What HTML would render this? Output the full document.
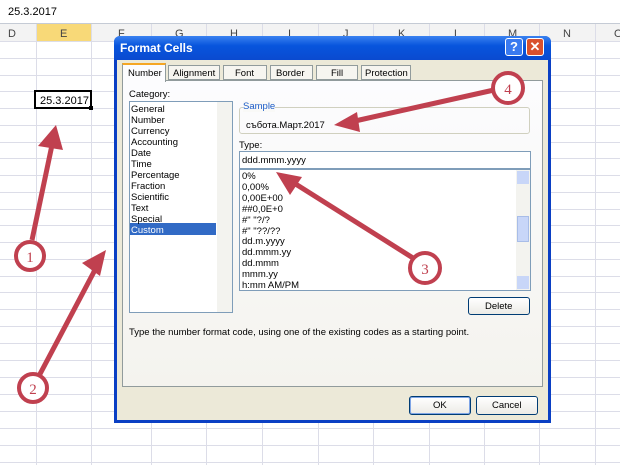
<!DOCTYPE html>
<html><head><style>
*{margin:0;padding:0;box-sizing:border-box}
body{width:620px;height:465px;overflow:hidden;background:#fff;font-family:"Liberation Sans",sans-serif;position:relative}
.abs{position:absolute}
.t{font-size:9.5px;color:#000;position:absolute;white-space:nowrap}
</style></head><body>
<div class="abs" style="left:0;top:0;width:620px;height:24px;background:#fff;border-bottom:1px solid #c5cbd5"></div>
<div class="t" style="left:8px;top:6px;font-size:11px">25.3.2017</div>
<svg class="abs" style="left:0;top:0" width="620" height="465">
<rect x="0" y="24" width="620" height="17" fill="#f3f3f3"/>
<rect x="36" y="24" width="55" height="17" fill="#f8d978"/>
<g stroke="#dcdde8" stroke-width="1">
<line x1="0" y1="41.5" x2="620" y2="41.5"/>
<line x1="0" y1="58.5" x2="620" y2="58.5"/><line x1="0" y1="75.5" x2="620" y2="75.5"/>
<line x1="0" y1="91.5" x2="620" y2="91.5"/><line x1="0" y1="108.5" x2="620" y2="108.5"/>
<line x1="0" y1="125.5" x2="620" y2="125.5"/><line x1="0" y1="142.5" x2="620" y2="142.5"/>
<line x1="0" y1="158.5" x2="620" y2="158.5"/><line x1="0" y1="175.5" x2="620" y2="175.5"/>
<line x1="0" y1="192.5" x2="620" y2="192.5"/><line x1="0" y1="209.5" x2="620" y2="209.5"/>
<line x1="0" y1="225.5" x2="620" y2="225.5"/><line x1="0" y1="242.5" x2="620" y2="242.5"/>
<line x1="0" y1="259.5" x2="620" y2="259.5"/><line x1="0" y1="276.5" x2="620" y2="276.5"/>
<line x1="0" y1="292.5" x2="620" y2="292.5"/><line x1="0" y1="309.5" x2="620" y2="309.5"/>
<line x1="0" y1="326.5" x2="620" y2="326.5"/><line x1="0" y1="343.5" x2="620" y2="343.5"/>
<line x1="0" y1="360.5" x2="620" y2="360.5"/><line x1="0" y1="377.5" x2="620" y2="377.5"/>
<line x1="0" y1="394.5" x2="620" y2="394.5"/><line x1="0" y1="411.5" x2="620" y2="411.5"/>
<line x1="0" y1="428.5" x2="620" y2="428.5"/><line x1="0" y1="445.5" x2="620" y2="445.5"/>
<line x1="0" y1="462.5" x2="620" y2="462.5"/>
<line x1="36.5" y1="24" x2="36.5" y2="465"/><line x1="91.5" y1="24" x2="91.5" y2="465"/>
<line x1="151.5" y1="24" x2="151.5" y2="465"/><line x1="206.5" y1="24" x2="206.5" y2="465"/>
<line x1="262.5" y1="24" x2="262.5" y2="465"/><line x1="318.5" y1="24" x2="318.5" y2="465"/>
<line x1="373.5" y1="24" x2="373.5" y2="465"/><line x1="429.5" y1="24" x2="429.5" y2="465"/>
<line x1="484.5" y1="24" x2="484.5" y2="465"/><line x1="539.5" y1="24" x2="539.5" y2="465"/>
<line x1="595.5" y1="24" x2="595.5" y2="465"/>
</g>
<g font-size="11" fill="#444" font-family="Liberation Sans">
<text x="8" y="37">D</text><text x="60" y="37">E</text>
<text x="118" y="37">F</text><text x="175" y="37">G</text><text x="230" y="37">H</text><text x="288" y="37">I</text>
<text x="343" y="37">J</text><text x="398" y="37">K</text><text x="454" y="37">L</text><text x="508" y="37">M</text>
<text x="563" y="37">N</text><text x="614" y="37">O</text></g>
<rect x="35" y="91" width="56" height="17" fill="#fff" stroke="#000" stroke-width="2"/>
<rect x="89" y="106" width="4" height="4" fill="#000"/>
<text x="40" y="104" font-size="11" font-family="Liberation Sans">25.3.2017</text>
</svg>
<div class="abs" style="left:114px;top:36px;width:437px;height:387px;background:#0a3fc4;border-radius:6px 6px 0 0"></div>
<div class="abs" style="left:114px;top:36px;width:437px;height:24px;background:linear-gradient(#3b82f0,#0855dd 40%,#0a4ad0);border-radius:6px 6px 0 0"></div>
<div class="t" style="left:120px;top:41px;color:#fff;font-weight:bold;font-size:12px">Format Cells</div>
<div class="abs" style="left:505px;top:38px;width:18px;height:18px;background:#3a7af0;border:1px solid #fff;border-radius:3px;color:#fff;font-weight:bold;font-size:13px;text-align:center;line-height:16px">?</div>
<div class="abs" style="left:526px;top:38px;width:18px;height:18px;background:#d9502e;border:1px solid #fff;border-radius:3px;color:#fff;font-weight:bold;font-size:13px;text-align:center;line-height:16px">✕</div>
<div class="abs" style="left:117px;top:60px;width:431px;height:360px;background:#ece9d8"></div>
<div class="abs" style="left:122px;top:80px;width:421px;height:307px;border:1px solid #919b9c;background:linear-gradient(#fcfcfe,#f4f3ee)"></div>
<div class="abs" style="left:122px;top:63px;width:44px;height:19px;background:#fcfcfe;border:1px solid #919b9c;border-bottom:none;border-top:2px solid #f5a623"></div>
<div class="t" style="left:128px;top:68px">Number</div>
<div class="abs" style="left:168px;top:65px;width:52px;height:15px;border:1px solid #919b9c;background:#f6f5f0"></div><div class="t" style="left:173px;top:68px">Alignment</div>
<div class="abs" style="left:223px;top:65px;width:44px;height:15px;border:1px solid #919b9c;background:#f6f5f0"></div><div class="t" style="left:235px;top:68px">Font</div>
<div class="abs" style="left:270px;top:65px;width:43px;height:15px;border:1px solid #919b9c;background:#f6f5f0"></div><div class="t" style="left:276px;top:68px">Border</div>
<div class="abs" style="left:316px;top:65px;width:42px;height:15px;border:1px solid #919b9c;background:#f6f5f0"></div><div class="t" style="left:331px;top:68px">Fill</div>
<div class="abs" style="left:361px;top:65px;width:50px;height:15px;border:1px solid #919b9c;background:#f6f5f0"></div><div class="t" style="left:365px;top:68px">Protection</div>
<div class="t" style="left:129px;top:89px">Category:</div>
<div class="abs" style="left:129px;top:101px;width:104px;height:212px;background:#fff;border:1px solid #7f9db9"></div>
<div class="abs" style="left:217px;top:102px;width:15px;height:210px;background:#f3f3ef"></div>
<div class="abs" style="left:130px;top:223px;width:86px;height:12px;background:#316ac5"></div>
<div class="t" style="left:131px;top:104px;line-height:11px">General<br>Number<br>Currency<br>Accounting<br>Date<br>Time<br>Percentage<br>Fraction<br>Scientific<br>Text<br>Special<br><span style="color:#fff">Custom</span></div>
<div class="abs" style="left:239px;top:107px;width:291px;height:27px;border:1px solid #d0d0bf;border-radius:3px"></div>
<div class="t" style="left:243px;top:101px;color:#1c5cc8;background:#f9f9f7">Sample</div>
<div class="t" style="left:246px;top:120px">събота.Март.2017</div>
<div class="t" style="left:239px;top:140px">Type:</div>
<div class="abs" style="left:239px;top:151px;width:292px;height:18px;background:#fff;border:1px solid #7f9db9"></div>
<div class="t" style="left:242px;top:155px">ddd.mmm.yyyy</div>
<div class="abs" style="left:239px;top:169px;width:292px;height:122px;background:#fff;border:1px solid #7f9db9"></div>
<div class="abs" style="left:516px;top:170px;width:14px;height:120px;background:#f3f3ef"></div>
<div class="abs" style="left:517px;top:216px;width:12px;height:26px;background:#c8d6f8;border:1px solid #a8bde8"></div>
<div class="abs" style="left:517px;top:171px;width:12px;height:13px;background:#c8d6f8"></div>
<div class="abs" style="left:517px;top:276px;width:12px;height:13px;background:#c8d6f8"></div>
<div class="t" style="left:242px;top:172px;line-height:10.9px">0%<br>0,00%<br>0,00E+00<br>##0,0E+0<br>#" "?/?<br>#" "??/??<br>dd.m.yyyy<br>dd.mmm.yy<br>dd.mmm<br>mmm.yy<br>h:mm AM/PM</div>
<div class="abs" style="left:468px;top:297px;width:62px;height:18px;border:1px solid #003c74;border-radius:3px;background:linear-gradient(#fff,#ecebe6)"></div>
<div class="t" style="left:485px;top:301px">Delete</div>
<div class="t" style="left:129px;top:327px">Type the number format code, using one of the existing codes as a starting point.</div>
<div class="abs" style="left:409px;top:396px;width:62px;height:19px;border:1px solid #003c74;border-radius:3px;background:linear-gradient(#fff,#ecebe6);box-shadow:inset 0 0 0 1px #7ea5e6"></div>
<div class="t" style="left:433px;top:400px">OK</div>
<div class="abs" style="left:476px;top:396px;width:62px;height:19px;border:1px solid #003c74;border-radius:3px;background:linear-gradient(#fff,#ecebe6)"></div>
<div class="t" style="left:492px;top:400px">Cancel</div>
<svg class="abs" style="left:0;top:0" width="620" height="465">
<g stroke="#c0404f" stroke-width="5" fill="none">
<line x1="32" y1="240" x2="52" y2="145"/>
<line x1="40" y1="374" x2="96" y2="268"/>
<line x1="413" y1="258" x2="294" y2="183"/>
<line x1="494" y1="90" x2="355" y2="121"/>
</g>
<g fill="#c0404f">
<polygon points="56,125 38,146 63,150"/>
<polygon points="106,250 82,263 100,276"/>
<polygon points="276,172 290,195 302,177"/>
<polygon points="334,125 357,112 360,132"/>
</g>
<g stroke="#c0404f" stroke-width="4" fill="#fff">
<circle cx="30" cy="256" r="14"/><circle cx="33" cy="388" r="14"/>
<circle cx="425" cy="268" r="15"/><circle cx="508" cy="88" r="15"/>
</g>
<g fill="#c0404f" font-size="15" font-family="Liberation Serif" text-anchor="middle">
<text x="30" y="262">1</text><text x="33" y="394">2</text><text x="425" y="274">3</text><text x="508" y="94">4</text>
</g>
</svg>
</body></html>
